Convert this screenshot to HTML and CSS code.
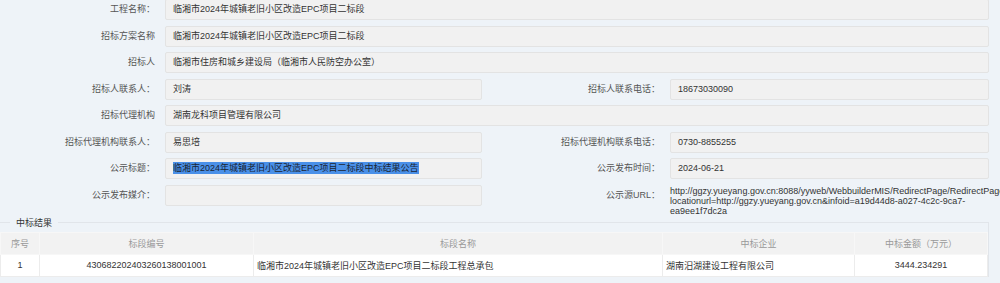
FILE: index.html
```html
<!DOCTYPE html>
<html lang="zh-CN">
<head>
  <meta charset="UTF-8">
  <title>中标结果公示</title>
  <link rel="stylesheet" href="styles.css">
</head>
<body>
  <div class="page">
    <div class="info-grid">
      <div class="label">工程名称：</div>
      <div class="box wide">临湘市2024年城镇老旧小区改造EPC项目二标段</div>

      <div class="label">招标方案名称</div>
      <div class="box wide">临湘市2024年城镇老旧小区改造EPC项目二标段</div>

      <div class="label">招标人</div>
      <div class="box wide">临湘市住房和城乡建设局（临湘市人民防空办公室）</div>

      <div class="label">招标人联系人：</div>
      <div class="box">刘涛</div>
      <div class="label">招标人联系电话：</div>
      <div class="box">18673030090</div>

      <div class="label">招标代理机构</div>
      <div class="box wide">湖南龙科项目管理有限公司</div>

      <div class="label">招标代理机构联系人：</div>
      <div class="box">易思培</div>
      <div class="label">招标代理机构联系电话：</div>
      <div class="box">0730-8855255</div>

      <div class="label">公示标题：</div>
      <div class="box"><span class="selected">临湘市2024年城镇老旧小区改造EPC项目二标段中标结果公告</span></div>
      <div class="label">公示发布时间：</div>
      <div class="box">2024-06-21</div>

      <div class="label">公示发布媒介：</div>
      <div class="box"></div>
      <div class="label">公示源URL：</div>
      <div class="url">
        <span class="nowrap">http://ggzy.yueyang.gov.cn:8088/yyweb/WebbuilderMIS/RedirectPage/RedirectPage.aspx?</span><br>
        locationurl=http://ggzy.yueyang.gov.cn&amp;infoid=a19d44d8-a027-4c2c-9ca7-<br>
        ea9ee1f7dc2a
      </div>
    </div>

    <fieldset class="result">
      <legend>中标结果</legend>
      <table class="result-table">
        <thead>
          <tr>
            <th class="col-no">序号</th>
            <th class="col-code">标段编号</th>
            <th class="col-name">标段名称</th>
            <th class="col-company">中标企业</th>
            <th class="col-amount">中标金额（万元）</th>
          </tr>
        </thead>
        <tbody>
          <tr>
            <td class="center">1</td>
            <td class="center">430682202403260138001001</td>
            <td>临湘市2024年城镇老旧小区改造EPC项目二标段工程总承包</td>
            <td>湖南汨湖建设工程有限公司</td>
            <td class="center">3444.234291</td>
          </tr>
        </tbody>
      </table>
    </fieldset>
  </div>
</body>
</html>
```

FILE: styles.css
```css
html {
  overflow: hidden;
}
body {
  margin: 0;
  background-color: #eef3f8;
  color: #333;
  font-family: "Liberation Sans", "Noto Sans CJK SC", sans-serif;
  font-size: 9px;
}
.page {
  width: 989px;
  margin-top: -1px;
}
.info-grid {
  display: grid;
  grid-template-columns: 155px 317px 168px 319px;
  column-gap: 10px;
  row-gap: 5.5px;
  align-items: start;
}
.label {
  height: 21px;
  line-height: 21px;
  text-align: right;
  color: #555;
  white-space: nowrap;
}
.box {
  box-sizing: border-box;
  height: 21px;
  line-height: 19px;
  padding: 0 7px;
  background-color: #f1f1f1;
  border: 1px solid #e3e3e3;
  border-radius: 2px;
  white-space: nowrap;
}
.box.wide {
  grid-column: 2 / 5;
}
.selected {
  background-color: #4a90e8;
  color: #1b2533;
  padding: 1px 0;
}
.url {
  line-height: 10px;
  padding-top: 1px;
  height: 31px;
  color: #333;
}
.nowrap {
  white-space: nowrap;
}
.result {
  margin: 0 0 0 -1px;
  padding: 3px 0 0 0;
  border: 1px solid #e1e5ea;
  border-left-color: transparent;
  border-bottom: none;
}
.result legend {
  margin-left: 10px;
  padding: 0 6px;
  line-height: 12px;
  color: #333;
}
.result-table {
  width: 100%;
  border-collapse: collapse;
  table-layout: fixed;
  background-color: #fff;
}
.result-table th,
.result-table td {
  height: 21px;
  padding: 0 3px;
  border: 1px solid #ececec;
  font-weight: normal;
  white-space: nowrap;
  overflow: hidden;
}
.result-table th {
  background-color: #f2f2f2;
  color: #999;
  text-align: center;
  border-color: #f7f7f7;
}
.result-table td.center {
  text-align: center;
}
.col-no { width: 32px; }
.col-code { width: 207px; }
.col-name { width: 402px; }
.col-company { width: 185px; }
```
